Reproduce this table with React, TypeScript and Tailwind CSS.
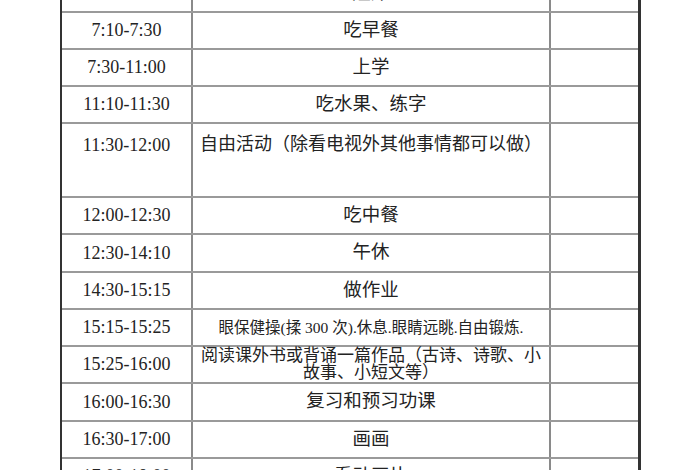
import React from "react";

type Row = { time: string; task: React.ReactNode; h: string; top?: boolean; small?: boolean };

const rows: Row[] = [
  { time: "6:50-7:10", task: "起床", h: "h-[37px]" },
  { time: "7:10-7:30", task: "吃早餐", h: "h-[37px]" },
  { time: "7:30-11:00", task: "上学", h: "h-[37px]" },
  { time: "11:10-11:30", task: "吃水果、练字", h: "h-[37px]" },
  {
    time: "11:30-12:00",
    task: <span className="text-[18px]">自由活动（除看电视外其他事情都可以做）</span>,
    h: "h-[74px]",
    top: true,
  },
  { time: "12:00-12:30", task: "吃中餐", h: "h-[37px]" },
  { time: "12:30-14:10", task: "午休", h: "h-[38px]" },
  { time: "14:30-15:15", task: "做作业", h: "h-[37px]" },
  { time: "15:15-15:25", task: "眼保健操(揉 300 次).休息.眼睛远眺.自由锻炼.", h: "h-[37px]", small: true },
  {
    time: "15:25-16:00",
    task: (
      <span className="block text-[17px] leading-[17px] -mt-[1px]">
        阅读课外书或背诵一篇作品（古诗、诗歌、小
        <br />
        故事、小短文等）
      </span>
    ),
    h: "h-[37px]",
  },
  { time: "16:00-16:30", task: "复习和预习功课", h: "h-[38px]" },
  { time: "16:30-17:00", task: "画画", h: "h-[37px]" },
  { time: "17:00-18:00", task: "看动画片", h: "h-[37px]" },
];

export default function App() {
  return (
    <div className="w-[700px] h-[470px] overflow-hidden bg-white">
      <div
        className="ml-[60px] w-[581px] -mt-[24px] border-l-2 border-r-[3px] border-[#333333] text-[#232323]"
        style={{ fontFamily: '"Liberation Serif", "Noto Sans CJK SC", serif' }}
      >
        {rows.map((r, i) => (
          <div
            key={i}
            className={`grid grid-cols-[131px_358px_1fr] border-b-2 border-[#9a9a9a] ${r.h}`}
          >
            <div
              className={`border-r-2 border-[#8a8a8a] flex justify-center text-[18px] ${
                r.top ? "items-start pt-[8px]" : "items-center"
              }`}
            >
              {r.time}
            </div>
            <div
              className={`border-r-2 border-[#8a8a8a] flex justify-center text-center whitespace-nowrap ${
                r.top ? "items-start pt-[7px]" : "items-center"
              } ${r.small ? "text-[15.5px]" : "text-[18.5px]"}`}
            >
              {r.task}
            </div>
            <div />
          </div>
        ))}
      </div>
    </div>
  );
}
